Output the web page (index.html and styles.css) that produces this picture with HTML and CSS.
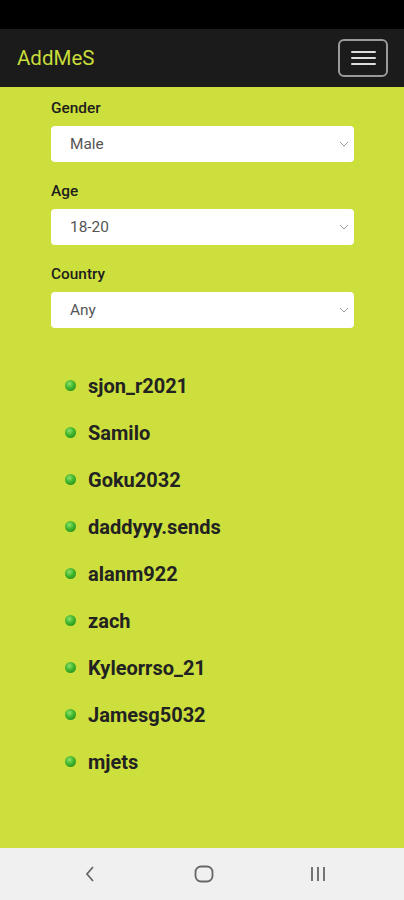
FILE: index.html
```html
<!DOCTYPE html>
<html>
<head>
<meta charset="utf-8">
<link rel="stylesheet" href="styles.css">
</head>
<body>
<div class="statusbar"></div>
<nav class="navbar">
  <span class="brand">AddMeS</span>
  <button class="toggler"><span></span><span></span><span></span></button>
</nav>
<main class="content">
  <form class="filters">
    <div class="group">
      <label class="label">Gender</label>
      <div class="select">Male<svg class="chev" viewBox="0 0 10 6" width="10" height="6"><path d="M1 1l4 4 4-4" fill="none" stroke="#999" stroke-width="1"/></svg></div>
    </div>
    <div class="group">
      <label class="label">Age</label>
      <div class="select">18-20<svg class="chev" viewBox="0 0 10 6" width="10" height="6"><path d="M1 1l4 4 4-4" fill="none" stroke="#999" stroke-width="1"/></svg></div>
    </div>
    <div class="group">
      <label class="label">Country</label>
      <div class="select">Any<svg class="chev" viewBox="0 0 10 6" width="10" height="6"><path d="M1 1l4 4 4-4" fill="none" stroke="#999" stroke-width="1"/></svg></div>
    </div>
  </form>
  <ul class="users">
    <li><span class="dot"></span>sjon_r2021</li>
    <li><span class="dot"></span>Samilo</li>
    <li><span class="dot"></span>Goku2032</li>
    <li><span class="dot"></span>daddyyy.sends</li>
    <li><span class="dot"></span>alanm922</li>
    <li><span class="dot"></span>zach</li>
    <li><span class="dot"></span>Kyleorrso_21</li>
    <li><span class="dot"></span>Jamesg5032</li>
    <li><span class="dot"></span>mjets</li>
  </ul>
</main>
<footer class="sysnav">
  <span class="navbtn"><svg width="12" height="18" viewBox="0 0 12 18"><path d="M9 2L3 9l6 7" fill="none" stroke="#666" stroke-width="1.8"/></svg></span>
  <span class="navbtn"><svg width="20" height="18" viewBox="0 0 20 18"><rect x="1.5" y="1.5" width="17" height="15" rx="5.5" fill="none" stroke="#666" stroke-width="1.8"/></svg></span>
  <span class="navbtn"><svg width="20" height="18" viewBox="0 0 20 18"><path d="M4 2v14M10 2v14M16 2v14" stroke="#666" stroke-width="1.8"/></svg></span>
</footer>
</body>
</html>
```
FILE: styles.css
```css
html, body {
  margin: 0;
  padding: 0;
}
body {
  width: 404px;
  height: 900px;
  display: flex;
  flex-direction: column;
  background: #cddf3c;
  font-family: Roboto, "Liberation Sans", sans-serif;
}
.statusbar {
  height: 29px;
  background: #000;
  flex: none;
}
.navbar {
  height: 58px;
  flex: none;
  background: #1b1b1b;
  display: flex;
  align-items: center;
  justify-content: space-between;
  padding: 0 16px 0 17px;
  box-sizing: border-box;
}
.brand {
  color: #c9dc3a;
  font-size: 20.5px;
}
.toggler {
  width: 50px;
  height: 38px;
  box-sizing: border-box;
  border: 2px solid #9a9a9a;
  border-radius: 6px;
  background: transparent;
  display: flex;
  flex-direction: column;
  align-items: center;
  justify-content: center;
  gap: 4px;
  padding: 0;
}
.toggler span {
  display: block;
  width: 25px;
  height: 2px;
  background: #ddd;
  border-radius: 1px;
}
.content {
  flex: 1;
  padding: 0 50px 0 51px;
}
.filters {
  padding-top: 12px;
}
.group {
  display: flex;
  flex-direction: column;
  margin-bottom: 20px;
}
.label {
  font-size: 15.4px;
  font-weight: 500;
  color: #1d1d1d;
  height: 19px;
  line-height: 19px;
  margin-bottom: 8px;
}
.select {
  height: 36px;
  background: #fff;
  border-radius: 4px;
  display: flex;
  align-items: center;
  justify-content: space-between;
  padding: 0 5px 0 19px;
  font-size: 15.4px;
  color: #555;
  box-sizing: border-box;
}
.chev {
  display: block;
}
.users {
  list-style: none;
  margin: 34px 0 0 0;
  padding: 0 0 0 14px;
}
.users li {
  height: 47px;
  display: flex;
  align-items: center;
  font-size: 20px;
  font-weight: 700;
  color: #222;
}
.dot {
  width: 11px;
  height: 11px;
  border-radius: 50%;
  background: radial-gradient(circle at 40% 35%, #8de26a 0%, #3fb52c 45%, #1e7f16 100%);
  margin-right: 12px;
  flex: none;
}
.sysnav {
  height: 52px;
  flex: none;
  background: #f0f0f0;
  display: grid;
  grid-template-columns: repeat(3, 114px);
  justify-content: center;
  align-items: center;
  padding-left: 4px;
}
.navbtn {
  display: flex;
  justify-content: center;
  align-items: center;
}
.navbtn svg {
  display: block;
}
```
